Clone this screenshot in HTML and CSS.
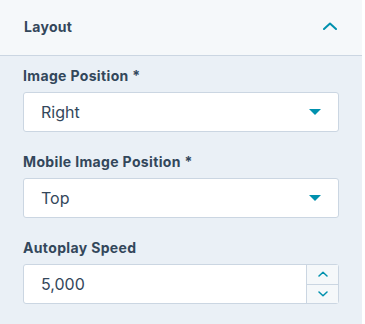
FILE: index.html
```html
<!DOCTYPE html>
<html lang="en">
<head>
    <meta charset="UTF-8">
    <meta name="viewport" content="width=device-width, initial-scale=1.0">
    <title>Layout Settings</title>
    <link rel="stylesheet" href="styles.css">
</head>
<body>
    <div class="panel">
        <div class="panel-header">
            <span class="panel-title">Layout</span>
            <svg class="collapse-icon" width="14" height="8" viewBox="0 0 14 8">
                <path d="M1 7 L7 1.5 L13 7" fill="none" stroke="#0091ae" stroke-width="2" stroke-linecap="round" stroke-linejoin="round"/>
            </svg>
        </div>
        <div class="panel-body">
            <div class="field">
                <label>Image Position *</label>
                <div class="select">
                    <span>Right</span>
                    <span class="caret"></span>
                </div>
            </div>
            <div class="field">
                <label>Mobile Image Position *</label>
                <div class="select">
                    <span>Top</span>
                    <span class="caret"></span>
                </div>
            </div>
            <div class="field">
                <label>Autoplay Speed</label>
                <div class="number">
                    <span class="number-value">5,000</span>
                    <div class="spinner">
                        <div class="spin-btn">
                            <svg width="10" height="6" viewBox="0 0 10 6"><path d="M1 5 L5 1.2 L9 5" fill="none" stroke="#0091ae" stroke-width="1.5" stroke-linecap="round" stroke-linejoin="round"/></svg>
                        </div>
                        <div class="spin-btn">
                            <svg width="10" height="6" viewBox="0 0 10 6"><path d="M1 1 L5 4.8 L9 1" fill="none" stroke="#0091ae" stroke-width="1.5" stroke-linecap="round" stroke-linejoin="round"/></svg>
                        </div>
                    </div>
                </div>
            </div>
        </div>
    </div>
</body>
</html>
```

FILE: styles.css
```css
body {
    margin: 0;
    background-color: #ffffff;
    font-family: 'Inter', 'Lato', sans-serif;
    color: #33475b;
}
.panel {
    width: 362px;
    height: 324px;
    background-color: #eaf0f6;
}
.panel-header {
    height: 56px;
    box-sizing: border-box;
    padding: 0 25px 0 24px;
    display: flex;
    justify-content: space-between;
    align-items: center;
    background-color: #f5f8fa;
    border-bottom: 1px solid #cbd6e2;
}
.panel-title {
    font-size: 14px;
    font-weight: 700;
    letter-spacing: 0.3px;
    margin-top: -2px;
}
.collapse-icon {
    margin-top: -3px;
}
.panel-body {
    padding: 10px 23px 0 23px;
}
.field {
    margin-bottom: 20px;
}
label {
    display: block;
    font-size: 14px;
    font-weight: 700;
    letter-spacing: 0.35px;
    line-height: 20px;
    margin-bottom: 6px;
}
.select, .number {
    height: 40px;
    box-sizing: border-box;
    background-color: #ffffff;
    border: 1px solid #cbd6e2;
    border-radius: 3px;
    display: flex;
    align-items: center;
    font-size: 16px;
}
.select {
    padding: 0 17px 0 17px;
    justify-content: space-between;
}
.caret {
    width: 0;
    height: 0;
    border-left: 6px solid transparent;
    border-right: 6px solid transparent;
    border-top: 6px solid #0091ae;
}
.number-value {
    flex: 1;
    padding-left: 17px;
}
.spinner {
    width: 31px;
    height: 100%;
    border-left: 1px solid #cbd6e2;
    display: flex;
    flex-direction: column;
}
.spin-btn {
    flex: 1;
    display: flex;
    align-items: center;
    justify-content: center;
    background-color: #f5f8fa;
}
.spin-btn + .spin-btn {
    border-top: 1px solid #cbd6e2;
}
```
